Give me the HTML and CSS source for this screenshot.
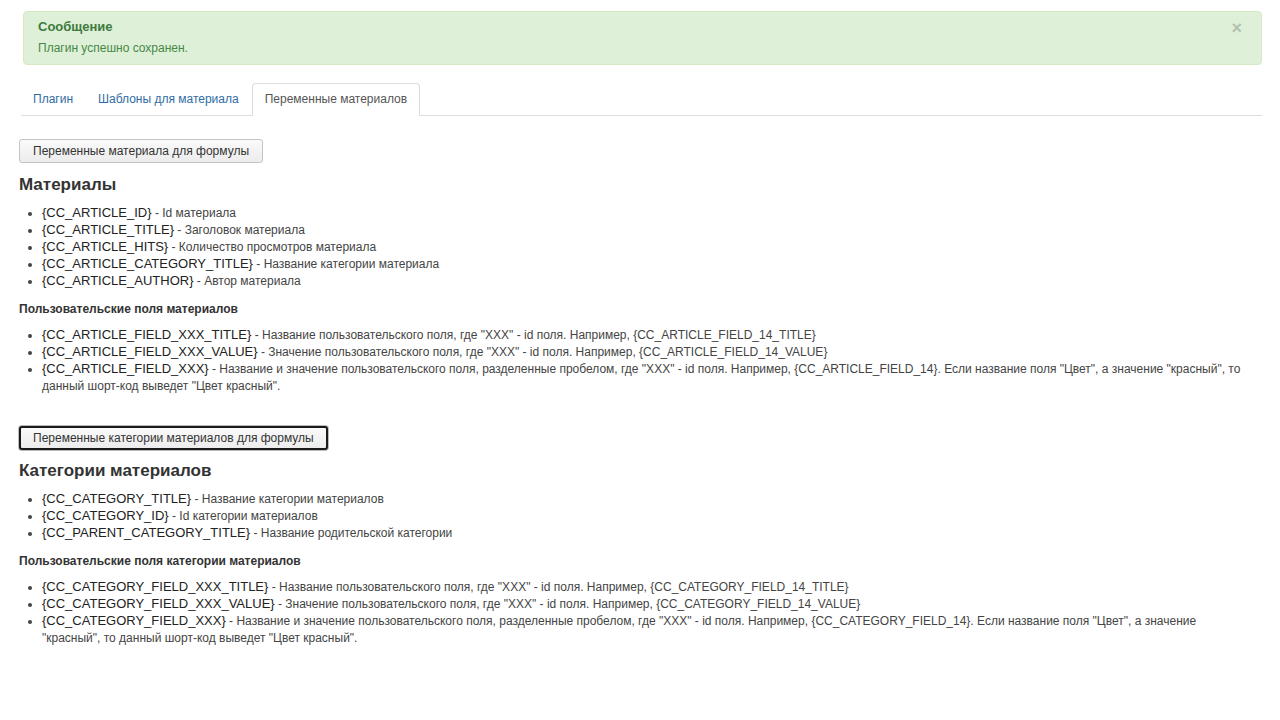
FILE: index.html
```html
<!DOCTYPE html>
<html lang="ru">
<head>
    <meta charset="UTF-8">
    <meta name="viewport" content="width=device-width, initial-scale=1.0">
    <title>Переменные материалов</title>
    <link rel="stylesheet" href="styles.css">
</head>
<body>
    <div class="page">
        <div class="alert">
            <button class="close" type="button">×</button>
            <h4 class="alert-heading">Сообщение</h4>
            <div class="alert-message">Плагин успешно сохранен.</div>
        </div>

        <ul class="tabs">
            <li><a href="#">Плагин</a></li>
            <li><a href="#">Шаблоны для материала</a></li>
            <li class="active"><a href="#">Переменные материалов</a></li>
        </ul>

        <div class="section">
            <button class="btn" type="button">Переменные материала для формулы</button>
            <h3>Материалы</h3>
            <ul class="vars">
                <li><span class="code">{CC_ARTICLE_ID}</span> - Id материала</li>
                <li><span class="code">{CC_ARTICLE_TITLE}</span> - Заголовок материала</li>
                <li><span class="code">{CC_ARTICLE_HITS}</span> - Количество просмотров материала</li>
                <li><span class="code">{CC_ARTICLE_CATEGORY_TITLE}</span> - Название категории материала</li>
                <li><span class="code">{CC_ARTICLE_AUTHOR}</span> - Автор материала</li>
            </ul>
            <h4>Пользовательские поля материалов</h4>
            <ul class="vars">
                <li><span class="code">{CC_ARTICLE_FIELD_XXX_TITLE}</span> - Название пользовательского поля, где "XXX" - id поля. Например, {CC_ARTICLE_FIELD_14_TITLE}</li>
                <li><span class="code">{CC_ARTICLE_FIELD_XXX_VALUE}</span> - Значение пользовательского поля, где "XXX" - id поля. Например, {CC_ARTICLE_FIELD_14_VALUE}</li>
                <li><span class="code">{CC_ARTICLE_FIELD_XXX}</span> - Название и значение пользовательского поля, разделенные пробелом, где "XXX" - id поля. Например, {CC_ARTICLE_FIELD_14}. Если название поля "Цвет", а значение "красный", то данный шорт-код выведет "Цвет красный".</li>
            </ul>
        </div>

        <div class="section">
            <button class="btn focused" type="button">Переменные категории материалов для формулы</button>
            <h3>Категории материалов</h3>
            <ul class="vars">
                <li><span class="code">{CC_CATEGORY_TITLE}</span> - Название категории материалов</li>
                <li><span class="code">{CC_CATEGORY_ID}</span> - Id категории материалов</li>
                <li><span class="code">{CC_PARENT_CATEGORY_TITLE}</span> - Название родительской категории</li>
            </ul>
            <h4>Пользовательские поля категории материалов</h4>
            <ul class="vars">
                <li><span class="code">{CC_CATEGORY_FIELD_XXX_TITLE}</span> - Название пользовательского поля, где "XXX" - id поля. Например, {CC_CATEGORY_FIELD_14_TITLE}</li>
                <li><span class="code">{CC_CATEGORY_FIELD_XXX_VALUE}</span> - Значение пользовательского поля, где "XXX" - id поля. Например, {CC_CATEGORY_FIELD_14_VALUE}</li>
                <li><span class="code">{CC_CATEGORY_FIELD_XXX}</span> - Название и значение пользовательского поля, разделенные пробелом, где "XXX" - id поля. Например, {CC_CATEGORY_FIELD_14}. Если название поля "Цвет", а значение "красный", то данный шорт-код выведет "Цвет красный".</li>
            </ul>
        </div>
    </div>
</body>
</html>
```

FILE: styles.css
```css
body {
    font-family: "Liberation Sans", Arial, sans-serif;
    font-size: 12px;
    line-height: 17px;
    color: #444;
    background: #fff;
    margin: 0;
    padding: 0;
}
.page {
    padding: 11px 18px 0 18px;
}
/* Alert */
.alert {
    margin-left: 5px;
    padding: 6px 14px 7px 14px;
    background-color: #dff0d8;
    border: 1px solid #d6e9c6;
    border-radius: 4px;
    color: #468847;
}
.alert-heading {
    margin: 0 0 4px;
    font-size: 13px;
    font-weight: bold;
    line-height: 18px;
    color: #3d7a3d;
}
.alert-message {
    line-height: 17px;
}
.close {
    float: right;
    margin: 1px 5px 0 0;
    padding: 0;
    border: 0;
    background: none;
    font-family: "Liberation Sans", Arial, sans-serif;
    font-size: 18px;
    font-weight: bold;
    line-height: 18px;
    color: #000;
    opacity: .2;
    cursor: pointer;
}
/* Tabs */
.tabs {
    display: flex;
    list-style: none;
    margin: 18px 0 0 3px;
    padding: 0;
    border-bottom: 1px solid #ddd;
}
.tabs li {
    margin-right: 1px;
    margin-bottom: -1px;
}
.tabs a {
    display: block;
    padding: 8px 11px;
    line-height: 15px;
    color: #2f6da4;
    text-decoration: none;
    border: 1px solid transparent;
    border-radius: 4px 4px 0 0;
}
.tabs .active a {
    color: #555;
    background: #fff;
    border-color: #ddd #ddd transparent;
    padding: 8px 12px;
}
/* Sections */
.section {
    margin-top: 23px;
}
.section + .section {
    margin-top: 31px;
}
.section + .section h3 {
    margin-top: 11px;
}
.btn {
    display: inline-block;
    height: 24px;
    padding: 0 13px;
    margin-left: 1px;
    font-family: "Liberation Sans", Arial, sans-serif;
    font-size: 12px;
    color: #333;
    background-color: #f3f3f3;
    background-image: linear-gradient(#fafafa, #ececec);
    border: 1px solid #c4c4c4;
    border-radius: 3px;
    cursor: pointer;
}
.btn.focused {
    border: 2px solid #1a1a1a;
    box-shadow: 0 0 0 1px #bbb;
    padding: 0 12px;
}
h3 {
    margin: 12px 0 10px 1px;
    font-size: 17px;
    line-height: 20px;
    font-weight: bold;
    color: #333;
}
h4 {
    margin: 11px 0 9px 1px;
    font-size: 12px;
    line-height: 17px;
    font-weight: bold;
    color: #333;
}
.vars {
    margin: 0;
    padding: 0 10px 0 24px;
}
.vars li {
    line-height: 17px;
}
.code {
    font-size: 13px;
    line-height: 15px;
    color: #222;
}
```
